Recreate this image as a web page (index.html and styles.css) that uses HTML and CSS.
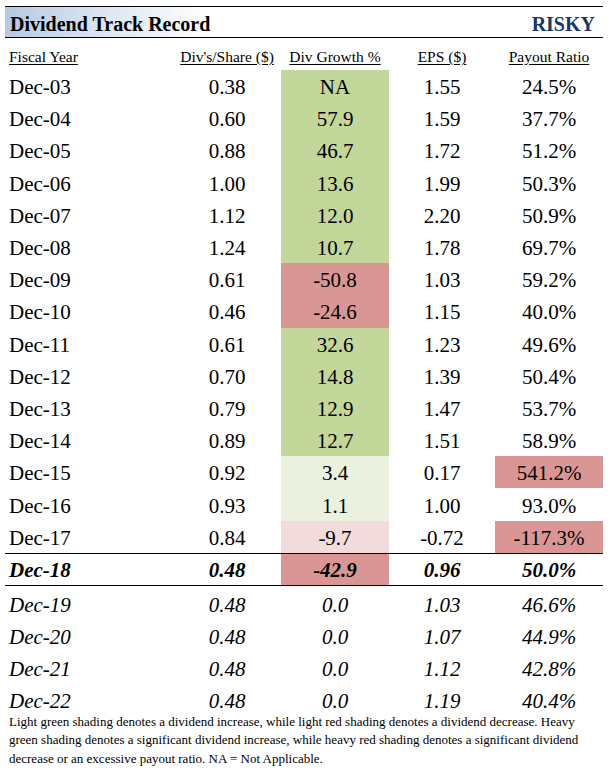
FILE: index.html
```html
<!DOCTYPE html>
<html>
<head>
<meta charset="utf-8">
<link rel="stylesheet" href="styles.css">
</head>
<body>
<div class="page">
  <div class="title-bar">
    <span class="title">Dividend Track Record</span>
    <span class="rating">RISKY</span>
  </div>
  <div class="table">
    <div class="row head">
      <div class="c1"><span class="u">Fiscal Year</span></div>
      <div class="c"><span class="u">Div's/Share ($)</span></div>
      <div class="c"><span class="u">Div Growth %</span></div>
      <div class="c"><span class="u">EPS ($)</span></div>
      <div class="c"><span class="u">Payout Ratio</span></div>
    </div>
    <div class="row"><div class="c1">Dec-03</div><div class="c">0.38</div><div class="c g">NA</div><div class="c">1.55</div><div class="c">24.5%</div></div>
    <div class="row"><div class="c1">Dec-04</div><div class="c">0.60</div><div class="c g">57.9</div><div class="c">1.59</div><div class="c">37.7%</div></div>
    <div class="row"><div class="c1">Dec-05</div><div class="c">0.88</div><div class="c g">46.7</div><div class="c">1.72</div><div class="c">51.2%</div></div>
    <div class="row"><div class="c1">Dec-06</div><div class="c">1.00</div><div class="c g">13.6</div><div class="c">1.99</div><div class="c">50.3%</div></div>
    <div class="row"><div class="c1">Dec-07</div><div class="c">1.12</div><div class="c g">12.0</div><div class="c">2.20</div><div class="c">50.9%</div></div>
    <div class="row"><div class="c1">Dec-08</div><div class="c">1.24</div><div class="c g">10.7</div><div class="c">1.78</div><div class="c">69.7%</div></div>
    <div class="row"><div class="c1">Dec-09</div><div class="c">0.61</div><div class="c r">-50.8</div><div class="c">1.03</div><div class="c">59.2%</div></div>
    <div class="row"><div class="c1">Dec-10</div><div class="c">0.46</div><div class="c r">-24.6</div><div class="c">1.15</div><div class="c">40.0%</div></div>
    <div class="row"><div class="c1">Dec-11</div><div class="c">0.61</div><div class="c g">32.6</div><div class="c">1.23</div><div class="c">49.6%</div></div>
    <div class="row"><div class="c1">Dec-12</div><div class="c">0.70</div><div class="c g">14.8</div><div class="c">1.39</div><div class="c">50.4%</div></div>
    <div class="row"><div class="c1">Dec-13</div><div class="c">0.79</div><div class="c g">12.9</div><div class="c">1.47</div><div class="c">53.7%</div></div>
    <div class="row"><div class="c1">Dec-14</div><div class="c">0.89</div><div class="c g">12.7</div><div class="c">1.51</div><div class="c">58.9%</div></div>
    <div class="row"><div class="c1">Dec-15</div><div class="c">0.92</div><div class="c lg">3.4</div><div class="c">0.17</div><div class="c r">541.2%</div></div>
    <div class="row"><div class="c1">Dec-16</div><div class="c">0.93</div><div class="c lg">1.1</div><div class="c">1.00</div><div class="c">93.0%</div></div>
    <div class="row"><div class="c1">Dec-17</div><div class="c">0.84</div><div class="c lr">-9.7</div><div class="c">-0.72</div><div class="c r">-117.3%</div></div>
    <div class="row current"><div class="c1">Dec-18</div><div class="c">0.48</div><div class="c r">-42.9</div><div class="c">0.96</div><div class="c">50.0%</div></div>
    <div class="row est"><div class="c1">Dec-19</div><div class="c">0.48</div><div class="c">0.0</div><div class="c">1.03</div><div class="c">46.6%</div></div>
    <div class="row est"><div class="c1">Dec-20</div><div class="c">0.48</div><div class="c">0.0</div><div class="c">1.07</div><div class="c">44.9%</div></div>
    <div class="row est"><div class="c1">Dec-21</div><div class="c">0.48</div><div class="c">0.0</div><div class="c">1.12</div><div class="c">42.8%</div></div>
    <div class="row est"><div class="c1">Dec-22</div><div class="c">0.48</div><div class="c">0.0</div><div class="c">1.19</div><div class="c">40.4%</div></div>
  </div>
  <p class="note">Light green shading denotes a dividend increase, while light red shading denotes a dividend decrease. Heavy green shading denotes a significant dividend increase, while heavy red shading denotes a significant dividend decrease or an excessive payout ratio. NA = Not Applicable.</p>
</div>
</body>
</html>
```
FILE: styles.css
```css
html, body {
  margin: 0;
  padding: 0;
  background: #fff;
}
body {
  font-family: "Liberation Serif", "DejaVu Serif", serif;
  color: #000;
}
.page {
  width: 598px;
  margin: 6px 0 0 5px;
}
.title-bar {
  height: 30px;
  border-top: 1.5px solid #000;
  border-bottom: 1.5px solid #000;
  background: linear-gradient(to right, #b6c9e3 0%, #dbe5f2 16%, #ffffff 34%);
  display: flex;
  justify-content: space-between;
  align-items: center;
  padding: 0 8px 0 5px;
}
.title {
  font-weight: bold;
  font-size: 20px;
  padding-top: 4px;
}
.rating {
  font-weight: bold;
  font-size: 20px;
  color: #1b3567;
  padding-top: 4px;
}
.table {
  display: flex;
  flex-direction: column;
}
.row {
  display: grid;
  grid-template-columns: 168px 108px 108px 106px 108px;
  height: 32.2px;
  font-size: 21px;
}
.row > div {
  display: flex;
  align-items: center;
  padding-top: 3px;
}
.c1 {
  padding-left: 4px;
}
.c {
  justify-content: center;
}
.head {
  height: 32px;
  font-size: 15.5px;
}
.head > div {
  align-items: flex-end;
  padding-top: 0;
  padding-bottom: 4px;
}
.u {
  text-decoration: underline;
  text-underline-offset: 2px;
}
.g { background: #c4d79b; }
.lg { background: #ebf1de; }
.r { background: #da9694; }
.lr { background: #f2dcdb; }
.current {
  font-weight: bold;
  font-style: italic;
  border-top: 1.5px solid #000;
  border-bottom: 1.5px solid #000;
  height: 33px;
  box-sizing: border-box;
}
.current > div {
  padding-top: 2px;
}
.est {
  font-style: italic;
}
.est > div {
  padding-top: 7px;
}
.note {
  margin: -2px 0 0;
  padding: 0 4px;
  font-size: 13px;
  line-height: 18.5px;
}
```
